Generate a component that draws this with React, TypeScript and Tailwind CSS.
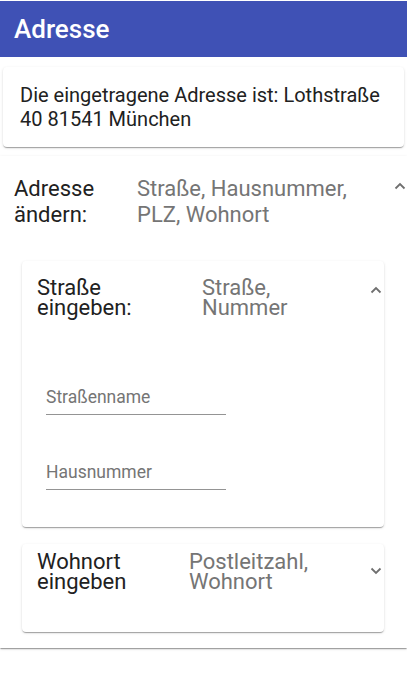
import React from "react";

const shadow =
  "shadow-[0_2px_1px_-1px_rgba(0,0,0,0.2),0_1px_1px_0_rgba(0,0,0,0.14),0_1px_3px_0_rgba(0,0,0,0.12)]";

function Chevron({ up }: { up: boolean }) {
  return (
    <svg width="12" height="8" viewBox="0 0 12 8" className="block">
      <polyline
        points={up ? "1.5,6.5 6,2 10.5,6.5" : "1.5,1.5 6,6 10.5,1.5"}
        fill="none"
        stroke="#6f6f6f"
        strokeWidth="1.8"
      />
    </svg>
  );
}

export default function App() {
  return (
    <div
      className="w-[407px] min-h-[679px] bg-white text-[#212121]"
      style={{ fontFamily: "Roboto, 'Noto Sans', sans-serif" }}
    >
      <div className="pt-px">
        <div className="h-14 bg-[#3f51b5] flex items-center pl-[14px]">
          <span className="text-white text-[26px] font-medium leading-none">Adresse</span>
        </div>
      </div>

      <div className={`mx-[3px] mt-[10px] rounded bg-white pl-[17px] pr-4 py-4 ${shadow}`}>
        <p className="text-[20px] leading-6">
          Die eingetragene Adresse ist: Lothstraße 40 81541 München
        </p>
      </div>

      <div className={`mt-[9px] bg-white pb-4 ${shadow}`}>
        <div className="flex items-start pl-[14px] pt-[20px] pr-[1px]">
          <div className="w-[107px] mr-4 shrink-0 text-[22px] leading-[26px]">Adresse ändern:</div>
          <div className="w-[230px] shrink-0 text-[22px] leading-[26px] text-[#757575]">
            Straße, Hausnummer, PLZ, Wohnort
          </div>
          <div className="ml-auto mt-[6px]">
            <Chevron up />
          </div>
        </div>

        <div className="mt-[33px] pl-[22px] pr-[23px] flex flex-col">
          <div className={`rounded bg-white h-[266px] pl-[15px] pr-[2px] pt-[17px] ${shadow}`}>
            <div className="flex items-start">
              <div className="w-[149px] mr-4 shrink-0 text-[22px] leading-[20px]">Straße eingeben:</div>
              <div className="w-[150px] shrink-0 text-[22px] leading-[20px] text-[#757575]">
                Straße, Nummer
              </div>
              <div className="ml-auto mt-[8px]">
                <Chevron up />
              </div>
            </div>
            <div className="ml-[9px] mt-[69px] w-[180px] border-b border-[#949494] pb-[7px]">
              <input
                placeholder="Straßenname"
                className="block w-full bg-transparent outline-none text-[17.5px] leading-[20px] h-[20px] placeholder:text-[#757575]"
              />
            </div>
            <div className="ml-[9px] mt-[47px] w-[180px] border-b border-[#949494] pb-[7px]">
              <input
                placeholder="Hausnummer"
                className="block w-full bg-transparent outline-none text-[17.5px] leading-[20px] h-[20px] placeholder:text-[#757575]"
              />
            </div>
          </div>

          <div className={`mt-[17px] rounded bg-white h-[88px] pl-[15px] pr-[2px] pt-[8px] ${shadow}`}>
            <div className="flex items-start">
              <div className="w-[136px] mr-4 shrink-0 text-[22px] leading-[20px]">Wohnort eingeben</div>
              <div className="w-[160px] shrink-0 text-[22px] leading-[20px] text-[#757575]">
                Postleitzahl, Wohnort
              </div>
              <div className="ml-auto mt-[15px]">
                <Chevron up={false} />
              </div>
            </div>
          </div>
        </div>
      </div>
    </div>
  );
}
